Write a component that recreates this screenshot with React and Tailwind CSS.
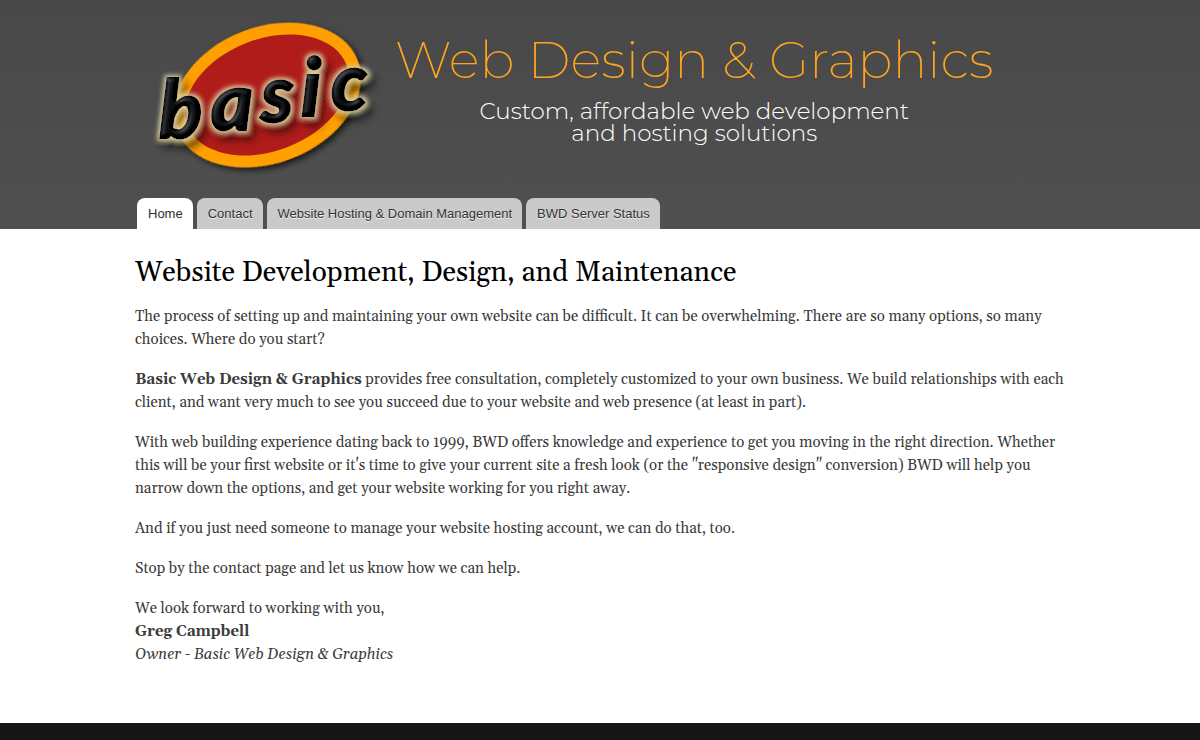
import React from 'react';

const tabs = [
  { name: 'Home', href: '#home' },
  { name: 'Contact', href: '#contact' },
  { name: 'Website Hosting & Domain Management', href: '#hosting' },
  { name: 'BWD Server Status', href: '#status' },
];

const Logo = () => (
  <svg className="w-[240px] h-[170px] shrink-0 overflow-visible" viewBox="0 0 240 170" role="img" aria-label="basic">
    <defs>
      <filter id="ovalShadow" x="-20%" y="-20%" width="140%" height="140%">
        <feDropShadow dx="2" dy="4" stdDeviation="3" floodColor="#000" floodOpacity="0.7" />
      </filter>
      <filter id="letterShadow" x="-20%" y="-30%" width="150%" height="170%">
        <feDropShadow dx="5" dy="7" stdDeviation="4" floodColor="#000" floodOpacity="0.6" />
      </filter>
      <filter id="letterGlow" x="-20%" y="-30%" width="140%" height="160%">
        <feMorphology in="SourceAlpha" operator="dilate" radius="2" result="fat" />
        <feGaussianBlur in="fat" stdDeviation="2" result="soft" />
        <feFlood floodColor="#e0d5a4" floodOpacity="0.9" result="cream" />
        <feComposite in="cream" in2="soft" operator="in" result="glow" />
        {/* soft highlight on the upper left of each letter */}
        <feGaussianBlur in="SourceAlpha" stdDeviation="2" result="bump" />
        <feSpecularLighting in="bump" surfaceScale="3" specularConstant="0.4" specularExponent="20" lightingColor="#6a6f79" result="light">
          <feDistantLight azimuth="225" elevation="35" />
        </feSpecularLighting>
        <feComposite in="light" in2="SourceAlpha" operator="in" result="bevel" />
        <feMerge>
          <feMergeNode in="glow" />
          <feMergeNode in="SourceGraphic" />
          <feMergeNode in="bevel" />
        </feMerge>
      </filter>
    </defs>
    <g transform="rotate(-21 132 87)">
      <ellipse cx="132" cy="87" rx="97" ry="68" fill="#ffa000" filter="url(#ovalShadow)" />
      <ellipse cx="132" cy="87" rx="85" ry="56" fill="#b01c1a" />
    </g>
    <g filter="url(#letterShadow)">
      <text
        x="24 76 126 166 196"
        y="130 122 114 108 102"
        fontFamily="Lato, sans-serif"
        fontSize="80"
        fontWeight="900"
        fontStyle="italic"
        fill="#050505"
        stroke="#050505"
        strokeWidth="2"
        filter="url(#letterGlow)"
      >
        basic
      </text>
    </g>
  </svg>
);

const Header = () => (
  <header className="bg-linear-to-b from-[#484848] to-[#505050]">
    <div className="max-w-[930px] mx-auto">
      <div className="flex items-start h-[198px] pt-2">
        <Logo />
        <div className="flex flex-col items-center pl-5 pt-5 font-['Montserrat','Inter',sans-serif]">
          <h1 className="text-[52px] leading-[64px] font-extralight text-[#ffa51e] whitespace-nowrap">
            Web Design &amp; Graphics
          </h1>
          <p className="text-[23px] leading-[22px] font-light text-white text-center pt-2">
            Custom, affordable web development
            <br />
            and hosting solutions
          </p>
        </div>
      </div>

      <nav className="px-[2px]">
        <ul className="flex gap-1">
          {tabs.map((tab, index) => (
            <li key={tab.name}>
              <a
                href={tab.href}
                className={`block h-[31px] pl-[11px] pr-[10px] rounded-t-lg text-[13px] leading-[31px] text-[#333] font-['Liberation_Sans',sans-serif] [text-shadow:0_1px_0_#eee] whitespace-nowrap ${
                  index === 0 ? 'bg-white' : 'bg-[#cacaca] hover:bg-white'
                }`}
              >
                {tab.name}
              </a>
            </li>
          ))}
        </ul>
      </nav>
    </div>
  </header>
);

const Content = () => (
  <main className="max-w-[930px] w-full mx-auto pt-[26px] pb-[57px] font-['Gelasio','Liberation_Serif',serif]">
    <h2 className="text-[28px] leading-9 text-black">Website Development, Design, and Maintenance</h2>
    <div className="flex flex-col gap-[17px] pt-[14px] text-[15px] leading-[23px] text-[#3b3b3b]">
      <p>
        The process of setting up and maintaining your own website can be difficult. It can be overwhelming. There are
        so many options, so many choices. Where do you start?
      </p>
      <p>
        <strong>Basic Web Design &amp; Graphics</strong> provides free consultation, completely customized to your own
        business. We build relationships with each client, and want very much to see you succeed due to your website
        and web presence (at least in part).
      </p>
      <p>
        With web building experience dating back to 1999, BWD offers knowledge and experience to get you moving in the
        right direction. Whether this will be your first website or it's time to give your current site a fresh look (or
        the "responsive design" conversion) BWD will help you narrow down the options, and get your website working for
        you right away.
      </p>
      <p>And if you just need someone to manage your website hosting account, we can do that, too.</p>
      <p>Stop by the contact page and let us know how we can help.</p>
      <p>
        We look forward to working with you,
        <br />
        <strong>Greg Campbell</strong>
        <br />
        <em>Owner - Basic Web Design &amp; Graphics</em>
      </p>
    </div>
  </main>
);

const App = () => (
  <div className="min-h-screen flex flex-col bg-white">
    <Header />
    <Content />
    <footer className="grow min-h-4 bg-[#161616]"></footer>
  </div>
);

export default App;
